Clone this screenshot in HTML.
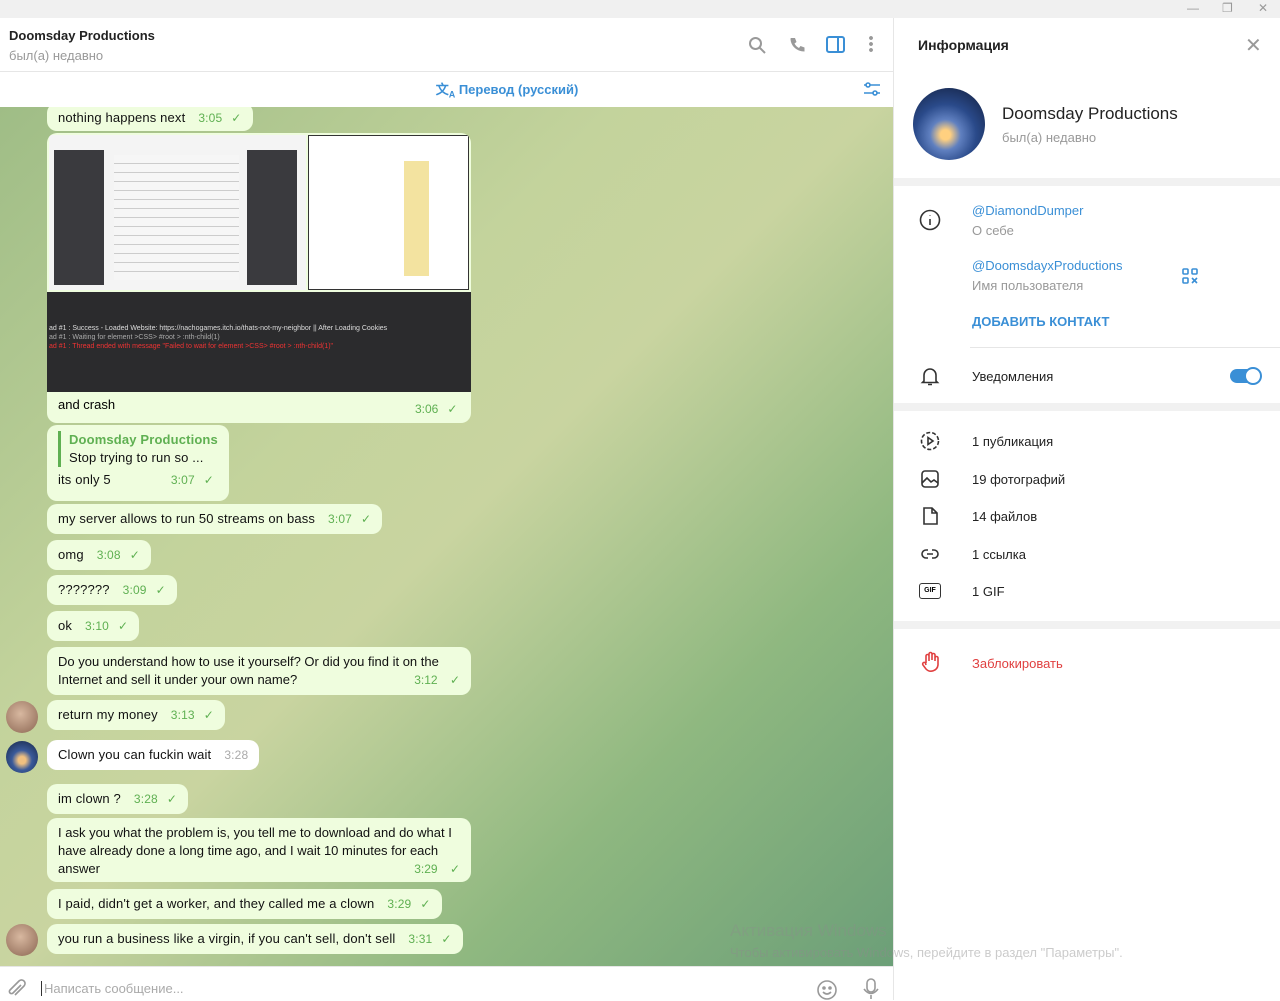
<!DOCTYPE html><html><head><meta charset="utf-8"><style>
*{box-sizing:border-box;margin:0;padding:0}
body{width:1280px;height:1000px;overflow:hidden;font-family:"Liberation Sans",sans-serif;font-size:13px;color:#000;position:relative;background:#fff}
.abs{position:absolute}
.chat{left:0;top:107px;width:894px;height:859px;background:linear-gradient(135deg,#9fbd86 0%,#c3d39c 35%,#c9d4a0 50%,#8fb880 75%,#6c9f78 100%);overflow:hidden}
.b{position:absolute;left:47px;background:#effdde;border-radius:10px;padding:6px 11px;font-size:13px;line-height:18px;color:#111;letter-spacing:.15px}
.t{color:#5fb052;font-size:12px;margin-left:13px}
.ck{color:#5fb052;font-size:12px;margin-left:9px}
.av{position:absolute;left:6px;width:32px;height:32px;border-radius:50%}
.ri{position:absolute;left:972px;font-size:13px;color:#222}
.ic{position:absolute;left:920px;width:20px;height:20px}
.sep{position:absolute;left:894px;width:386px;height:8px;background:#f1f1f1}
</style></head><body>
<div class="abs" style="left:0;top:0;width:1280px;height:18px;background:#f0f0f0"></div>
<div class="abs" style="left:1187px;top:1px;color:#999;font-size:12px">—</div>
<div class="abs" style="left:1222px;top:1px;color:#999;font-size:12px">❐</div>
<div class="abs" style="left:1258px;top:1px;color:#999;font-size:12px">✕</div>
<div class="abs" style="left:0;top:18px;width:894px;height:54px;border-bottom:1px solid #e6e6e6">
<div class="abs" style="left:9px;top:10px;font-weight:bold;font-size:13px;color:#222">Doomsday Productions</div>
<div class="abs" style="left:9px;top:30px;font-size:13px;color:#999">был(а) недавно</div>
<svg class="abs" style="left:748px;top:18px" width="18" height="18" fill="none" stroke="#999" stroke-width="2"><circle cx="7.5" cy="7.5" r="5.5"/><path d="M12 12l5 5"/></svg>
<svg class="abs" style="left:788px;top:18px" width="18" height="18" fill="#999"><path d="M3 2l4 0 1.5 4-2 1.5c1 2 2.5 3.5 4.5 4.5l1.5-2 4 1.5v4c-8 0-14-6-14-13z"/></svg>
<svg class="abs" style="left:826px;top:18px" width="20" height="18" fill="none" stroke="#3a8fd6" stroke-width="2"><rect x="1" y="1" width="17" height="15" rx="2"/><path d="M12 1v15"/></svg>
<div class="abs" style="left:869px;top:17px;width:4px;height:18px;background:radial-gradient(circle,#999 1.8px,transparent 2px) 0 0/4px 6px"></div>
</div>
<div class="abs" style="left:0;top:73px;width:894px;height:34px;text-align:center;line-height:34px;color:#3a8fd6;font-size:13px;font-weight:bold;padding-left:120px">文<sub style="font-size:9px">A</sub> Перевод (русский)</div>
<svg class="abs" style="left:863px;top:81px" width="18" height="16" fill="none" stroke="#3a8fd6" stroke-width="1.6"><path d="M1 4h16M1 12h16"/><circle cx="5" cy="4" r="2" fill="#fff"/><circle cx="12" cy="12" r="2" fill="#fff"/></svg>
<div class="abs chat">
<div class="b" style="top:-4px;height:28px;padding-top:6px">nothing happens next<span class="t">3:05</span><span class="ck">✓</span></div>
<div class="abs" style="left:47px;top:26px;width:424px;height:290px;border-radius:10px;overflow:hidden;background:#effdde">
<div class="abs" style="left:2px;top:2px;width:257px;height:155px;background:#f4f4f4"><div class="abs" style="left:5px;top:15px;width:50px;height:135px;background:#3a3a3e"></div><div class="abs" style="left:65px;top:20px;width:125px;height:125px;background:repeating-linear-gradient(#f6f6f6 0 8px,#ccc 8px 9px)"></div><div class="abs" style="left:198px;top:15px;width:50px;height:135px;background:#3a3a3e"></div></div>
<div class="abs" style="left:261px;top:2px;width:161px;height:155px;background:#fff;border:1px solid #333"><div class="abs" style="left:95px;top:25px;width:25px;height:115px;background:#f3e3a0"></div></div>
<div class="abs" style="left:0;top:159px;width:424px;height:100px;background:#2b2b2d"><div class="abs" style="left:2px;top:32px;font-size:7px;color:#ddd;line-height:9px;white-space:nowrap">ad #1 : Success - Loaded Website: https://nachogames.itch.io/thats-not-my-neighbor || After Loading Cookies<br><span style="color:#aaa">ad #1 : Waiting for element &gt;CSS&gt; #root &gt; :nth-child(1)</span><br><span style="color:#e33">ad #1 : Thread ended with message "Failed to wait for element &gt;CSS&gt; #root &gt; :nth-child(1)"</span></div></div>
<div class="abs" style="left:11px;top:264px;font-size:13px">and crash</div><div class="abs" style="left:355px;top:268px"><span class="t">3:06</span><span class="ck">✓</span></div>
</div>
<div class="b" style="top:318px;width:182px;height:76px;padding:6px 11px"><div style="border-left:3px solid #5fb052;padding-left:8px;margin-bottom:4px;line-height:18px"><span style="color:#5fb052;font-weight:bold">Doomsday Productions</span><br>Stop trying to run so ...</div>its only 5<span class="t" style="margin-left:60px">3:07</span><span class="ck">✓</span></div>
<div class="b" style="top:397px">my server allows to run 50 streams on bass<span class="t">3:07</span><span class="ck">✓</span></div>
<div class="b" style="top:433px">omg<span class="t">3:08</span><span class="ck">✓</span></div>
<div class="b" style="top:468px">???????<span class="t">3:09</span><span class="ck">✓</span></div>
<div class="b" style="top:504px">ok<span class="t">3:10</span><span class="ck">✓</span></div>
<div class="b" style="top:540px;width:424px;letter-spacing:0">Do you understand how to use it yourself? Or did you find it on the Internet and sell it under your own name?<span class="t" style="float:right;margin-top:0">3:12 <span class="ck">✓</span></span></div>
<div class="av" style="top:594px;background:radial-gradient(circle at 45% 40%,#d8b8a0,#8b6652)"></div>
<div class="b" style="top:593px">return my money<span class="t">3:13</span><span class="ck">✓</span></div>
<div class="av" style="top:634px;background:radial-gradient(circle at 50% 60%,#f0c080 0 15%,#3a5a9a 40%,#15233f)"></div>
<div class="b" style="top:633px;background:#fff">Clown you can fuckin wait<span class="t" style="color:#aaa">3:28</span></div>
<div class="b" style="top:677px">im clown ?<span class="t">3:28</span><span class="ck">✓</span></div>
<div class="b" style="top:711px;width:424px;padding-bottom:4px;letter-spacing:0">I ask you what the problem is, you tell me to download and do what I have already done a long time ago, and I wait 10 minutes for each answer<span class="t" style="float:right">3:29 <span class="ck">✓</span></span></div>
<div class="b" style="top:782px">I paid, didn't get a worker, and they called me a clown<span class="t">3:29</span><span class="ck">✓</span></div>
<div class="av" style="top:817px;background:radial-gradient(circle at 45% 40%,#d8b8a0,#8b6652)"></div>
<div class="b" style="top:817px">you run a business like a virgin, if you can't sell, don't sell<span class="t">3:31</span><span class="ck">✓</span></div>
</div>
<div class="abs" style="left:0;top:966px;width:894px;height:34px;background:#fff;border-top:1px solid #e6e6e6">
<svg class="abs" style="left:6px;top:12px" width="20" height="20" fill="none" stroke="#999" stroke-width="1.6"><path d="M15 6l-8 8a2 2 0 01-3-3l9-9a3.5 3.5 0 015 5l-9 9"/></svg>
<div class="abs" style="left:41px;top:14px;color:#aaa;font-size:13px;border-left:1px solid #333;padding-left:2px">Написать сообщение...</div>
<svg class="abs" style="left:816px;top:12px" width="22" height="22" fill="none" stroke="#999" stroke-width="1.6"><circle cx="11" cy="11" r="9"/><circle cx="8" cy="9" r="1" fill="#999"/><circle cx="14" cy="9" r="1" fill="#999"/><path d="M7 13q4 4 8 0"/></svg>
<svg class="abs" style="left:862px;top:11px" width="18" height="22" fill="none" stroke="#999" stroke-width="1.6"><rect x="5" y="1" width="8" height="13" rx="4"/><path d="M2 11q7 9 14 0M9 17v4"/></svg>
</div>
<div class="abs" style="left:893px;top:18px;width:1px;height:982px;background:#e6e6e6"></div>
<div class="abs" style="left:918px;top:37px;font-weight:bold;font-size:14px;color:#222">Информация</div>
<div class="abs" style="left:1245px;top:33px;color:#999;font-size:20px">✕</div>
<div class="abs" style="left:913px;top:88px;width:72px;height:72px;border-radius:50%;background:radial-gradient(circle at 45% 65%,#ffd080 0 8%,#6080c0 25%,#2a4a8a 50%,#101a35)"></div>
<div class="abs" style="left:1002px;top:104px;font-size:17px;color:#222">Doomsday Productions</div>
<div class="abs" style="left:1002px;top:130px;font-size:13px;color:#999">был(а) недавно</div>
<div class="sep" style="top:178px"></div>
<svg class="abs" style="left:919px;top:209px" width="22" height="22" fill="none" stroke="#333" stroke-width="1.6"><circle cx="11" cy="11" r="9.5"/><path d="M11 10v6M11 6.5v.5"/></svg>
<div class="ri" style="top:203px;color:#3a8fd6">@DiamondDumper</div>
<div class="ri" style="top:223px;color:#999">О себе</div>
<div class="ri" style="top:258px;color:#3a8fd6">@DoomsdayxProductions</div>
<div class="ri" style="top:278px;color:#999">Имя пользователя</div>
<svg class="abs" style="left:1182px;top:268px" width="16" height="16" fill="none" stroke="#3a8fd6" stroke-width="1.6"><rect x="1" y="1" width="5" height="5" rx="1"/><rect x="10" y="1" width="5" height="5" rx="1"/><rect x="1" y="10" width="5" height="5" rx="1"/><path d="M10 10l5 5M15 10l-5 5"/></svg>
<div class="ri" style="top:314px;color:#3a8fd6;font-weight:bold">ДОБАВИТЬ КОНТАКТ</div>
<div class="abs" style="left:970px;top:347px;width:310px;height:1px;background:#e6e6e6"></div>
<svg class="abs" style="left:920px;top:366px" width="20" height="20" fill="none" stroke="#333" stroke-width="1.6"><path d="M4 15V9a6 6 0 0112 0v6l1.5 1.5h-15zM8 18.5h4"/></svg>
<div class="ri" style="top:369px">Уведомления</div>
<div class="abs" style="left:1230px;top:369px;width:30px;height:14px;border-radius:7px;background:#3a8fd6"></div>
<div class="abs" style="left:1244px;top:367px;width:18px;height:18px;border-radius:50%;background:#fff;border:2.5px solid #3a8fd6"></div>
<div class="sep" style="top:403px"></div>
<svg class="ic" style="top:431px" fill="none" stroke="#333" stroke-width="1.6"><circle cx="10" cy="10" r="8.5" stroke-dasharray="4 2"/><path d="M8 6.5l5 3.5-5 3.5z"/></svg>
<div class="ri" style="top:434px">1 публикация</div>
<svg class="ic" style="top:469px" fill="none" stroke="#333" stroke-width="1.6"><rect x="2" y="2" width="16" height="16" rx="3"/><path d="M2 14l5-5 4 4 3-2 4 3"/></svg>
<div class="ri" style="top:472px">19 фотографий</div>
<svg class="ic" style="top:506px" fill="none" stroke="#333" stroke-width="1.6"><path d="M4 2h8l5 5v11H4zM12 2v5h5"/></svg>
<div class="ri" style="top:509px">14 файлов</div>
<svg class="ic" style="top:544px" fill="none" stroke="#333" stroke-width="1.6"><path d="M8 6H6a4 4 0 000 8h2M12 6h2a4 4 0 010 8h-2M7 10h6"/></svg>
<div class="ri" style="top:547px">1 ссылка</div>
<div class="abs" style="left:919px;top:583px;width:22px;height:16px;border:1.6px solid #333;border-radius:3px;font-size:7px;font-weight:bold;text-align:center;line-height:13px">GIF</div>
<div class="ri" style="top:584px">1 GIF</div>
<div class="sep" style="top:621px"></div>
<svg class="abs" style="left:920px;top:651px" width="22" height="22" fill="none" stroke="#e04040" stroke-width="1.6"><path d="M6 12V5a1.5 1.5 0 013 0v5M9 9V3a1.5 1.5 0 013 0v6M12 9V4a1.5 1.5 0 013 0v6M15 10V7a1.5 1.5 0 013 0v7a7 7 0 01-12 4l-3-4a1.5 1.5 0 012.5-2L6 14"/></svg>
<div class="ri" style="top:656px;color:#e04040">Заблокировать</div>
<div class="abs" style="left:730px;top:921px;color:rgba(140,140,140,.35);font-size:17px">Активация Windows</div>
<div class="abs" style="left:730px;top:945px;color:rgba(140,140,140,.45);font-size:13px;white-space:nowrap">Чтобы активировать Windows, перейдите в раздел "Параметры".</div>
</body></html>
